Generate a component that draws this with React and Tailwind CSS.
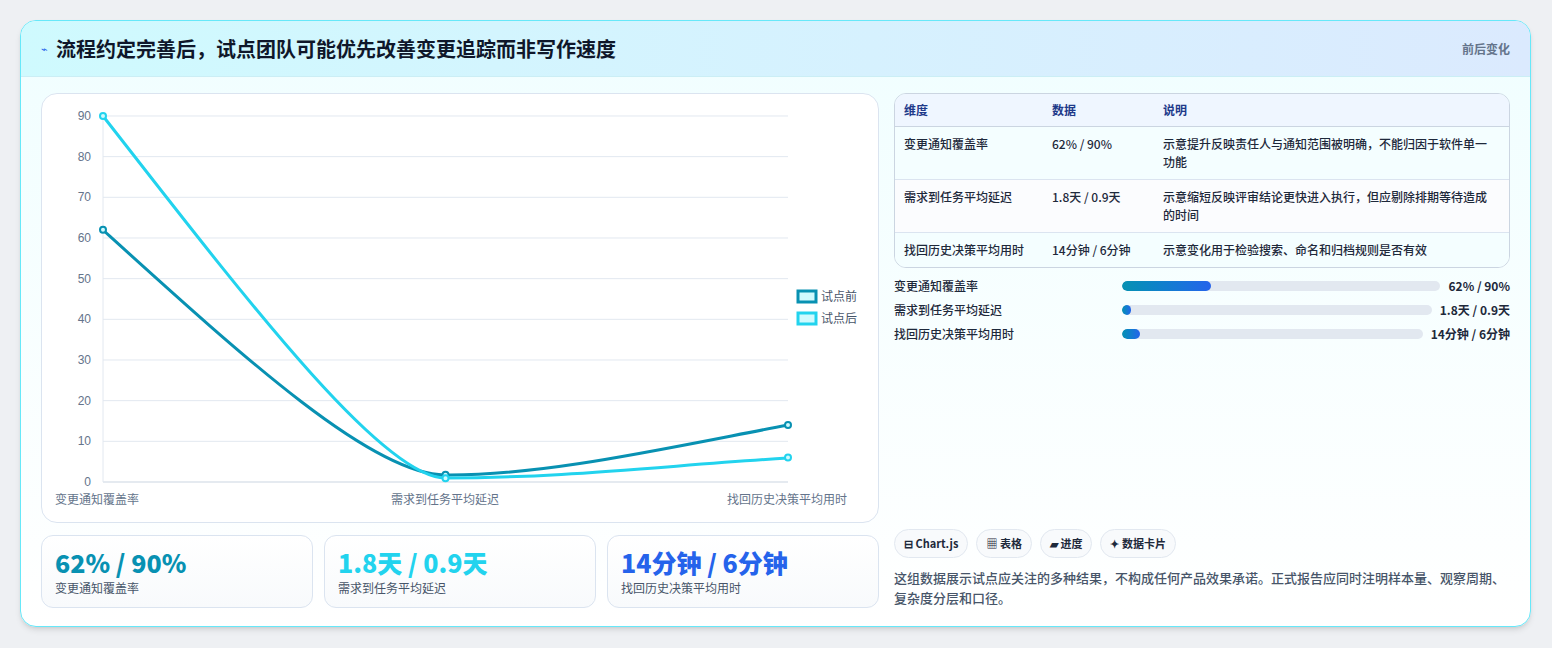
import React from 'react';

const rows = [
  ['变更通知覆盖率', '62% / 90%', '示意提升反映责任人与通知范围被明确，不能归因于软件单一功能'],
  ['需求到任务平均延迟', '1.8天 / 0.9天', '示意缩短反映评审结论更快进入执行，但应剔除排期等待造成的时间'],
  ['找回历史决策平均用时', '14分钟 / 6分钟', '示意变化用于检验搜索、命名和归档规则是否有效'],
];
const bars = [
  ['变更通知覆盖率', '62% / 90%', 28],
  ['需求到任务平均延迟', '1.8天 / 0.9天', 3],
  ['找回历史决策平均用时', '14分钟 / 6分钟', 6],
];
const stats = [
  ['62% / 90%', '变更通知覆盖率', 'text-[#0891b2]'],
  ['1.8天 / 0.9天', '需求到任务平均延迟', 'text-[#22d3ee]'],
  ['14分钟 / 6分钟', '找回历史决策平均用时', 'text-[#2563eb]'],
];

function Chart() {
  const y = v => 388 - v * 4.067;
  const xs = [61, 403.5, 746];
  const before = [62, 1.8, 14];
  const after = [90, 0.9, 6];
  return (
    <svg width="838" height="428" className="block" style={{ fontFamily: '"Liberation Sans", "Noto Sans CJK SC", sans-serif' }}>
      {[0, 10, 20, 30, 40, 50, 60, 70, 80, 90].map(v => (
        <g key={v}>
          <line x1="61" x2="746" y1={y(v)} y2={y(v)} stroke={v === 0 ? '#cbd5e1' : '#e2e8f0'} />
          <text x="49" y={y(v) + 4} textAnchor="end" fontSize="12" fill="#64748b">{v}</text>
        </g>
      ))}
      <line x1="61" x2="61" y1="22" y2="388" stroke="#e2e8f0" />
      <text x="55" y="410" textAnchor="middle" fontSize="12" fill="#64748b">变更通知覆盖率</text>
      <text x="403" y="410" textAnchor="middle" fontSize="12" fill="#64748b">需求到任务平均延迟</text>
      <text x="745" y="410" textAnchor="middle" fontSize="12" fill="#64748b">找回历史决策平均用时</text>
      <path d="M61,136 C200,262 330,381 403,381 C500,382 620,355 746,331" fill="none" stroke="#0891b2" strokeWidth="3" />
      <path d="M61,22 C200,200 340,384 403,384 C520,384 620,372 746,364" fill="none" stroke="#22d3ee" strokeWidth="3" />
      {xs.map((x, i) => (
        <g key={i}>
          <circle cx={x} cy={y(before[i])} r="3" fill="#cffafe" stroke="#0891b2" strokeWidth="2" />
          <circle cx={x} cy={y(after[i])} r="3" fill="#cffafe" stroke="#22d3ee" strokeWidth="2" />
        </g>
      ))}
      <rect x="756" y="197" width="18" height="11" fill="#cffafe" stroke="#0891b2" strokeWidth="3" />
      <text x="779" y="207" fontSize="12" fill="#475569">试点前</text>
      <rect x="756" y="219" width="18" height="11" fill="#cffafe" stroke="#22d3ee" strokeWidth="3" />
      <text x="779" y="229" fontSize="12" fill="#475569">试点后</text>
    </svg>
  );
}

export default function App() {
  return (
    <div className="w-[1552px] h-[648px] bg-[#eef0f3] p-5 pr-[21px]" style={{ fontFamily: '"Noto Sans CJK SC", "Noto Sans", sans-serif' }}>
      <div className="h-[607px] rounded-2xl border border-[#67e8f9] bg-gradient-to-b from-[#f0feff] to-white overflow-hidden shadow-md">
        <div className="h-[56px] flex items-center justify-between px-5 bg-gradient-to-r from-[#cffafe] to-[#dbeafe] border-b border-[#cbeef5]">
          <div className="flex items-center gap-2">
            <span className="text-[#2563eb] text-[11px]">⌁</span>
            <h1 className="text-[20px] font-bold text-[#0f172a]">流程约定完善后，试点团队可能优先改善变更追踪而非写作速度</h1>
          </div>
          <span className="text-[12px] font-bold text-[#64748b]">前后变化</span>
        </div>
        <div className="flex gap-[15px] px-5 pt-4">
          <div className="w-[838px] flex flex-col gap-3">
            <div className="h-[430px] rounded-2xl border border-[#dbe4f0] bg-white"><Chart /></div>
            <div className="grid grid-cols-3 gap-[11px]">
              {stats.map(([v, l, c]) => (
                <div key={l} className="h-[73px] rounded-xl border border-[#dbe4f0] bg-gradient-to-b from-white to-[#f8fafc] px-[13px] pt-[10px]">
                  <div className={`text-[25px] font-extrabold leading-8 ${c}`}>{v}</div>
                  <div className="text-[12px] text-[#475569] mt-[1px]">{l}</div>
                </div>
              ))}
            </div>
          </div>
          <div className="w-[620px] flex flex-col">
            <div className="rounded-xl border border-[#cbd5e1] overflow-hidden text-[12px] text-[#1e293b]">
              <div className="grid grid-cols-[148px_111px_1fr] h-[33px] items-center bg-[#eff6ff] border-b border-[#cbd5e1] px-[9px] font-bold text-[#1e3a8a]">
                <span>维度</span><span>数据</span><span>说明</span>
              </div>
              {rows.map(([a, b, c], i) => (
                <div key={a} className={`grid grid-cols-[148px_111px_1fr] px-[9px] py-[8px] leading-[18px] font-medium ${i < 2 ? 'border-b border-[#dbe4f0] min-h-[53px]' : ''} ${i === 1 ? 'bg-[#fbfcfe]' : 'bg-[#f4feff]'}`}>
                  <span>{a}</span><span>{b}</span><span className="pr-2">{c}</span>
                </div>
              ))}
            </div>
            <div className="flex flex-col gap-[8px] mt-[10px] text-[12px] text-[#1e293b]">
              {bars.map(([l, v, w]) => (
                <div key={l} className="flex items-center gap-2 h-[16px]">
                  <span className="w-[220px] font-medium">{l}</span>
                  <div className="flex-1 h-[10px] rounded-full bg-[#e2e8f0] overflow-hidden">
                    <div className="h-full rounded-full bg-gradient-to-r from-[#0891b2] to-[#2563eb]" style={{ width: w + '%' }} />
                  </div>
                  <span className="font-bold">{v}</span>
                </div>
              ))}
            </div>
            <div className="flex gap-2 mt-auto text-[11px] font-bold text-[#1e293b]">
              {['⊟ Chart.js', '▦ 表格', '▰ 进度', '✦ 数据卡片'].map(t => (
                <span key={t} className="h-[29px] px-[9px] flex items-center rounded-full border border-[#e2e8f0] bg-[#f8fafc]">{t}</span>
              ))}
            </div>
            <p className="mt-[10px] text-[13px] leading-[20px] text-[#475569] font-medium">这组数据展示试点应关注的多种结果，不构成任何产品效果承诺。正式报告应同时注明样本量、观察周期、复杂度分层和口径。</p>
          </div>
        </div>
      </div>
    </div>
  );
}
